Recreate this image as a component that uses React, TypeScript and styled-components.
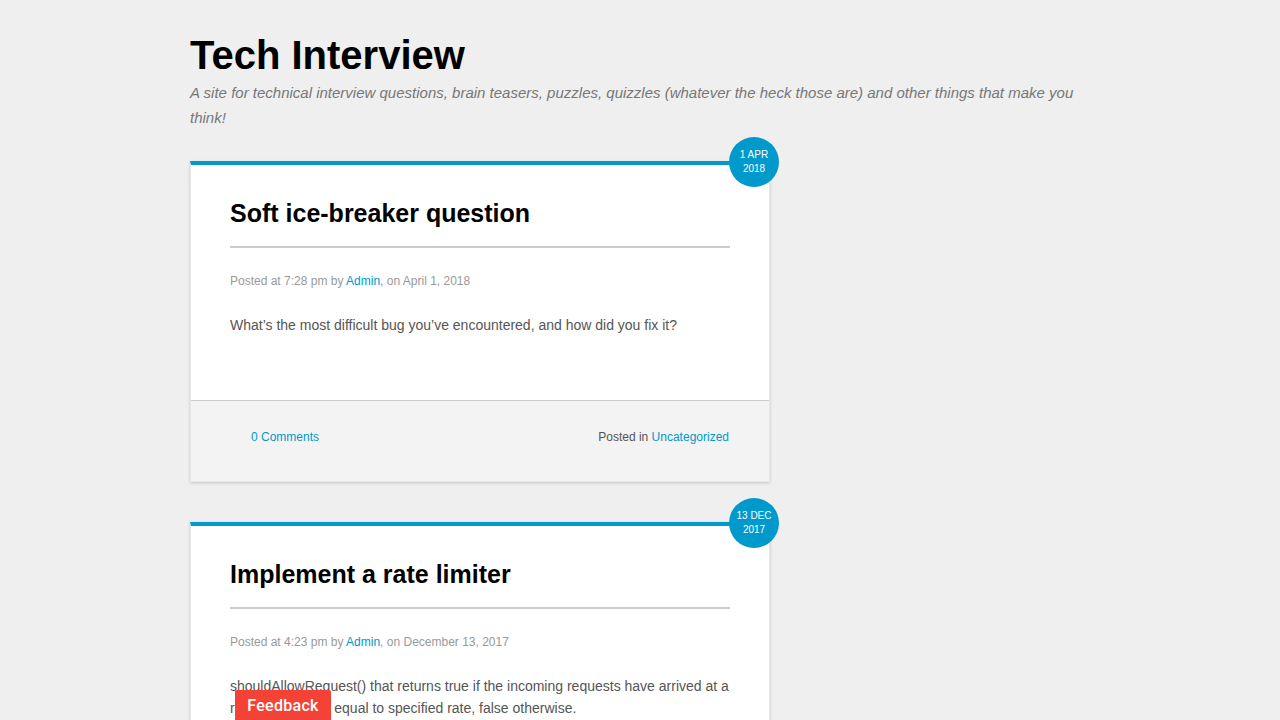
import React from "react";
import styled, { createGlobalStyle } from "styled-components";

const Global = createGlobalStyle`
  html, body { margin: 0; padding: 0; background: #efefef; }
  body { font-family: "Liberation Sans", Arial, sans-serif; }
  a { color: #0099cc; text-decoration: none; }
`;

const Page = styled.div`
  width: 900px;
  padding: 32px 0 0 190px;
`;

const SiteTitle = styled.h1`
  margin: 0;
  font-weight: 700;
  font-size: 40px;
  line-height: 46px;
  color: #000;
`;

const Tagline = styled.p`
  margin: 2px 0 0;
  font-style: italic;
  font-size: 15px;
  line-height: 25px;
  color: #777;
`;

const Posts = styled.div`
  display: flex;
  flex-direction: column;
  gap: 40px;
  margin-top: 31px;
  width: 580px;
`;

const Card = styled.article`
  position: relative;
  background: #fff;
  border: 1px solid #e6e6e6;
  border-top: 4px solid #0099cc;
  box-shadow: 0 1px 3px rgba(0, 0, 0, 0.18);
`;

const Badge = styled.div`
  position: absolute;
  top: -28px;
  right: -10px;
  width: 50px;
  height: 50px;
  border-radius: 50%;
  background: #0099cc;
  color: #fff;
  display: flex;
  flex-direction: column;
  align-items: center;
  justify-content: center;
  font-size: 10px;
  line-height: 14px;
  text-align: center;
`;

const Body = styled.div`
  padding: 32px 39px 64px;
`;

const PostTitle = styled.h2`
  margin: 0;
  padding-bottom: 17px;
  border-bottom: 2px solid #ccc;
  font-size: 25px;
  line-height: 32px;
  font-weight: 700;
  color: #000;
`;

const Meta = styled.div`
  margin-top: 24px;
  font-size: 12px;
  line-height: 18px;
  color: #999;
`;

const Text = styled.p`
  margin: 24px 0 0;
  font-size: 14px;
  line-height: 22px;
  color: #555;
`;

const Footer = styled.footer`
  display: flex;
  justify-content: space-between;
  align-items: center;
  height: 81px;
  box-sizing: border-box;
  padding: 0 40px 8px 60px;
  background: #f3f3f3;
  border-top: 1px solid #ccc;
  font-size: 12px;
  color: #555;
`;

const FeedbackButton = styled.button`
  position: fixed;
  left: 235px;
  bottom: 0;
  width: 96px;
  height: 30px;
  border: none;
  border-radius: 2px 2px 0 0;
  background: #f44336;
  color: #fff;
  font-family: Roboto, "Liberation Sans", sans-serif;
  font-weight: 500;
  font-size: 16px;
  letter-spacing: 0.3px;
  padding: 0;
`;

type Post = {
  day: string;
  year: string;
  title: string;
  time: string;
  date: string;
  text: string;
};

const posts: Post[] = [
  {
    day: "1 APR",
    year: "2018",
    title: "Soft ice-breaker question",
    time: "7:28 pm",
    date: "April 1, 2018",
    text: "What’s the most difficult bug you’ve encountered, and how did you fix it?",
  },
  {
    day: "13 DEC",
    year: "2017",
    title: "Implement a rate limiter",
    time: "4:23 pm",
    date: "December 13, 2017",
    text: "shouldAllowRequest() that returns true if the incoming requests have arrived at a rate less than or equal to specified rate, false otherwise.",
  },
];

export default function App() {
  return (
    <>
      <Global />
      <Page>
        <SiteTitle>Tech Interview</SiteTitle>
        <Tagline>
          A site for technical interview questions, brain teasers, puzzles, quizzles (whatever the heck those are) and other things that make you think!
        </Tagline>
        <Posts>
          {posts.map((p) => (
            <Card key={p.title}>
              <Badge>
                <span>{p.day}</span>
                <span>{p.year}</span>
              </Badge>
              <Body>
                <PostTitle>{p.title}</PostTitle>
                <Meta>
                  Posted at {p.time} by <a href="#">Admin</a>, on {p.date}
                </Meta>
                <Text>{p.text}</Text>
              </Body>
              <Footer>
                <a href="#">0 Comments</a>
                <span>
                  Posted in <a href="#">Uncategorized</a>
                </span>
              </Footer>
            </Card>
          ))}
        </Posts>
      </Page>
      <FeedbackButton>Feedback</FeedbackButton>
    </>
  );
}
